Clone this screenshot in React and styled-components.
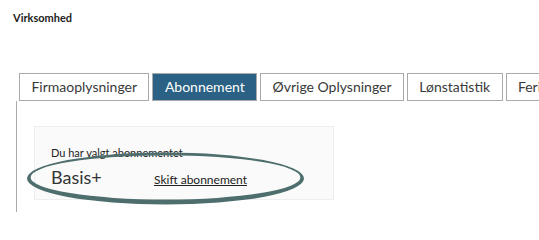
import React, { useState } from "react";
import styled, { createGlobalStyle } from "styled-components";

const GlobalStyle = createGlobalStyle`
  html, body {
    margin: 0;
    padding: 0;
    background: #ffffff;
    font-family: Lato, "Open Sans", Arial, sans-serif;
    color: #333;
  }
  body {
    overflow: hidden;
  }
`;

const tabs = [
  "Firmaoplysninger",
  "Abonnement",
  "Øvrige Oplysninger",
  "Lønstatistik",
  "Ferie",
];

// outer and inner ellipse, offset so the pen line is thicker at the bottom
const ringPath =
  "M1 27.5 a138.5 26 0 1 0 277 0 a138.5 26 0 1 0 -277 0 Z " +
  "M4.6 26.4 a134.9 22.2 0 1 0 269.8 0 a134.9 22.2 0 1 0 -269.8 0 Z";

function App() {
  const [active, setActive] = useState("Abonnement");

  return (
    <Page>
      <GlobalStyle />
      <Title>Virksomhed</Title>
      <TabSection>
        <TabList>
          {tabs.map((t) => (
            <Tab key={t} active={t === active} onClick={() => setActive(t)}>
              {t}
            </Tab>
          ))}
        </TabList>
        <Panel>
          <PlanBox>
            <PlanLabel>Du har valgt abonnementet</PlanLabel>
            <PlanRow>
              <PlanName>Basis+</PlanName>
              <ChangeLink href="#">Skift abonnement</ChangeLink>
            </PlanRow>
            {/* hand drawn highlight ring */}
            <Ring viewBox="0 0 280 56" width="280" height="56">
              <path d={ringPath} fill="#4e6d6d" fillRule="evenodd" />
            </Ring>
          </PlanBox>
        </Panel>
      </TabSection>
    </Page>
  );
}

//styles

const Page = styled.div`
  width: 539px;
  height: 212px;
  padding: 10px 0 0 13px;
  box-sizing: border-box;
  overflow: hidden;
`;

const Title = styled.div`
  font-size: 11px;
  font-weight: bold;
  line-height: 15px;
  color: #222;
`;

const TabSection = styled.div`
  margin: 48px 0 0 3px;
`;

const TabList = styled.div`
  display: flex;
  gap: 3px;
  padding-left: 3px;
  white-space: nowrap;
`;

const Tab = styled.div`
  flex-shrink: 0;
  padding: 3px 11.4px;
  line-height: 20px;
  font-size: 14px;
  border: 1px solid #aaa;
  cursor: pointer;
  color: ${(props) => (props.active ? "#ffffff" : "#3a3a3a")};
  background: ${(props) => (props.active ? "#2a6184" : "#ffffff")};
`;

const Panel = styled.div`
  border-left: 1px solid #aaa;
  padding: 25px 17px 40px;
`;

const PlanBox = styled.div`
  position: relative;
  width: 300px;
  height: 74px;
  box-sizing: border-box;
  padding: 19px 16px 0;
  background: #fafafa;
  border: 1px solid #eee;
`;

const PlanLabel = styled.div`
  font-size: 11px;
  line-height: 14px;
  color: #222;
`;

const PlanRow = styled.div`
  display: flex;
  align-items: baseline;
  margin-top: 6px;
`;

const PlanName = styled.span`
  font-size: 18px;
  line-height: 22px;
  color: #333;
  width: 103px;
`;

const ChangeLink = styled.a`
  font-size: 12px;
  color: #222;
  text-decoration: underline;
`;

const Ring = styled.svg`
  position: absolute;
  left: -9px;
  top: 24px;
  pointer-events: none;
  overflow: visible;
`;

export default App;
